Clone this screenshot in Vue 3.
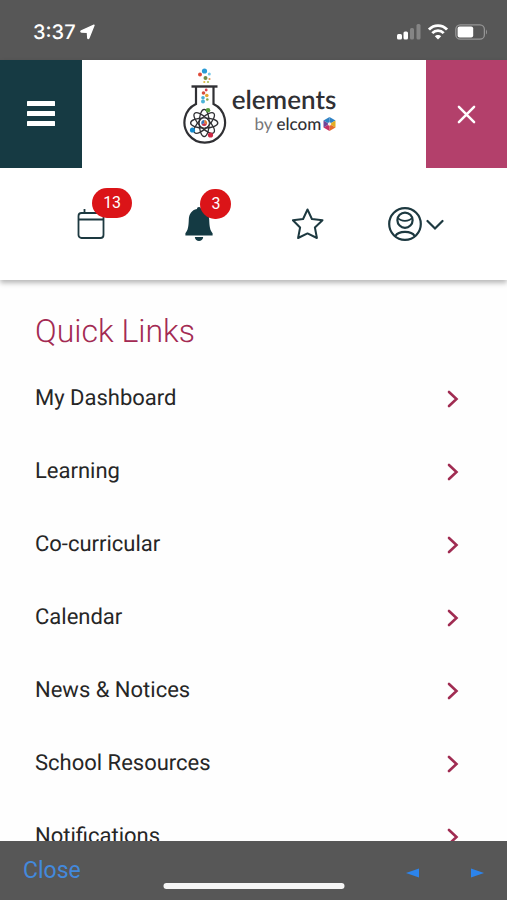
<script setup>
const links = [
  'My Dashboard',
  'Learning',
  'Co-curricular',
  'Calendar',
  'News & Notices',
  'School Resources',
  'Notifications',
]
</script>

<template>
  <div class="screen">
    <div class="status">
      <div class="status-time">
        <span>3:37</span>
        <svg width="15" height="16" viewBox="0 0 15 16" aria-hidden="true">
          <path d="M14 1.2 L8.8 14.2 Q8.2 15 7.8 14 L7.4 8.4 L1.4 8 Q.4 7.4 1.4 6.8 Z" fill="#fff" stroke="#fff" stroke-width="1.4" stroke-linejoin="round" />
        </svg>
      </div>
      <div class="status-icons">
        <svg width="24" height="16" viewBox="0 0 24 16" aria-hidden="true">
          <rect x="0" y="10" width="5" height="5.5" rx="1.5" fill="#fff" />
          <rect x="6.5" y="7.5" width="4.5" height="8" rx="1.5" fill="#fff" />
          <rect x="13" y="4" width="4" height="11.5" rx="1.5" fill="#858585" />
          <rect x="19.5" y="0" width="4" height="15.5" rx="1.5" fill="#858585" />
        </svg>
        <svg width="20" height="16" viewBox="0 0 20 16" fill="none" stroke="#fff" stroke-width="2.8" aria-hidden="true">
          <path d="M1 5.6 C6 .4 14 .4 19 5.6" />
          <path d="M4.3 9.1 C7.5 5.8 12.5 5.8 15.7 9.1" />
          <path d="M10 15.4 L6.8 12.2 C8.5 10.5 11.5 10.5 13.2 12.2 Z" fill="#fff" stroke="none" />
        </svg>
        <svg width="33" height="16" viewBox="0 0 33 16" aria-hidden="true">
          <rect x=".8" y=".8" width="28.6" height="14.4" rx="4.5" fill="none" stroke="#969696" stroke-width="1.3" />
          <rect x="2.6" y="2.6" width="15.6" height="10.8" rx="2" fill="#fff" />
          <path d="M31 5.4 Q33 8 31 10.6 Z" fill="#969696" />
        </svg>
      </div>
    </div>

    <header class="header">
      <div class="topbar">
        <button class="menu" type="button" aria-label="Menu">
          <svg width="28" height="26" viewBox="0 0 28 26" fill="#fff" aria-hidden="true">
            <rect y="0" width="28" height="5" rx=".5" />
            <rect y="10" width="28" height="5" rx=".5" />
            <rect y="20" width="28" height="5" rx=".5" />
          </svg>
        </button>
        <a class="brand" href="#">
          <svg width="44" height="77" viewBox="0 0 44 77" aria-hidden="true">
            <g fill="none" stroke="#303034">
              <path d="M13 19 V36 A20.3 20.3 0 1 0 30.5 36 V19" stroke-width="2.2" />
              <path d="M8.5 18.5 H34.5" stroke-width="2.4" />
              <g stroke-width="1.3">
                <ellipse cx="21.2" cy="55" rx="13.6" ry="5" />
                <ellipse cx="21.2" cy="55" rx="13.6" ry="5" transform="rotate(45 21.2 55)" />
                <ellipse cx="21.2" cy="55" rx="13.6" ry="5" transform="rotate(90 21.2 55)" />
                <ellipse cx="21.2" cy="55" rx="13.6" ry="5" transform="rotate(135 21.2 55)" />
              </g>
            </g>
            <circle cx="21.2" cy="55" r="4.4" fill="#fff" />
            <path d="M21.2 55 V52 A3 3 0 0 1 23.8 56.5 Z" fill="#e47a2e" />
            <path d="M21.2 55 L23.8 56.5 A3 3 0 0 1 18.6 56.5 Z" fill="#c8324b" />
            <path d="M21.2 55 L18.6 56.5 A3 3 0 0 1 21.2 52 Z" fill="#3973bb" />
            <circle cx="25" cy="42.3" r="2.3" fill="#579b3c" />
            <circle cx="9.5" cy="62" r="2.6" fill="#168acb" />
            <circle cx="27.5" cy="67" r="2.6" fill="#cc2844" />
            <circle cx="21.5" cy="3" r="2.6" fill="#2a9bd5" />
            <circle cx="17" cy="6.6" r="2" fill="#df4a39" />
            <circle cx="26.3" cy="6" r="1.5" fill="#73c7e8" />
            <circle cx="22.5" cy="10" r="2" fill="#718a48" />
            <circle cx="26.5" cy="11" r="1.1" fill="#e49151" />
            <circle cx="21.3" cy="14" r="1.1" fill="#e2b83c" />
            <circle cx="25" cy="14" r="1.1" fill="#a7bd58" />
            <circle cx="23.2" cy="22" r="1.4" fill="#d5404d" />
            <circle cx="20.5" cy="25" r="1.8" fill="#d64d3c" />
            <circle cx="23.8" cy="27.5" r="1.8" fill="#e4a531" />
            <circle cx="20" cy="29.7" r="1.8" fill="#45acd8" />
            <circle cx="24.3" cy="31.5" r="1.3" fill="#83a74d" />
            <circle cx="20" cy="33.5" r="2" fill="#4bb4d8" />
          </svg>
          <span class="wordmark">
            <span class="name">elements</span>
            <span class="by">
              <span>by</span> <b>elcom</b>
              <svg width="13" height="14" viewBox="0 0 13 14" aria-hidden="true">
                <path d="M6.5 7 L6.5 0 L12.5 3.5 Z" fill="#2f82c4" />
                <path d="M6.5 7 L12.5 3.5 V10.5 Z" fill="#e3ad21" />
                <path d="M6.5 7 L12.5 10.5 L6.5 14 Z" fill="#e76c2c" />
                <path d="M6.5 7 L6.5 14 L.5 10.5 Z" fill="#c52f65" />
                <path d="M6.5 7 L.5 10.5 V3.5 Z" fill="#704598" />
                <path d="M6.5 7 L.5 3.5 L6.5 0 Z" fill="#2f82c4" />
                <circle cx="6.5" cy="7" r="1.8" fill="#f5ece8" />
              </svg>
            </span>
          </span>
        </a>
        <button class="dismiss" type="button" aria-label="Close menu">
          <svg width="19" height="19" viewBox="0 0 20 20" fill="none" stroke="#fff" stroke-width="2.6" stroke-linecap="round" aria-hidden="true">
            <path d="M2 2 L18 18 M18 2 L2 18" />
          </svg>
        </button>
      </div>

      <nav class="tools" aria-label="Account tools">
        <button class="tool" type="button" aria-label="Calendar, 13 new">
          <span class="icon">
            <svg width="28" height="32" viewBox="0 0 28 32" fill="none" stroke="#1d3940" stroke-width="1.8" aria-hidden="true">
              <rect x="1.5" y="5" width="25" height="25" rx="3" />
              <path d="M1.5 11.5 H26.5 M7.5 1 V5" />
            </svg>
            <span class="badge">13</span>
          </span>
        </button>
        <button class="tool" type="button" aria-label="Alerts, 3 new">
          <span class="icon">
            <svg width="28" height="34" viewBox="0 0 28 34" fill="#143a43" aria-hidden="true">
              <path d="M14 0 C12.6 0 12 .8 12 2 C6.5 3 4 7.4 3.8 12.5 C3.6 19 3 23.5 .4 26.2 V28.4 H27.6 V26.2 C25 23.5 24.4 19 24.2 12.5 C24 7.4 21.5 3 16 2 C16 .8 15.4 0 14 0 Z" />
              <path d="M9.8 30 H18.2 C17.8 35.2 10.2 35.2 9.8 30 Z" />
            </svg>
            <span class="badge">3</span>
          </span>
        </button>
        <button class="tool" type="button" aria-label="Favourites">
          <svg width="32" height="32" viewBox="0 0 32 32" fill="none" stroke="#1d3940" stroke-width="2" stroke-linejoin="round" aria-hidden="true">
            <path d="M15.5 1.5 L19.9 11 L30.5 12.2 L22.9 19.5 L24.9 30 L15.5 25.4 L6.1 30 L8.1 19.5 L.9 12.2 L11.1 11 Z" />
          </svg>
        </button>
        <button class="tool" type="button" aria-label="Profile">
          <svg width="56" height="34" viewBox="0 0 56 34" fill="none" stroke="#1d3940" stroke-width="2.2" aria-hidden="true">
            <circle cx="17" cy="17" r="15.8" />
            <circle cx="17" cy="13.2" r="7.6" />
            <path d="M9.8 10.8 C13 14.8 21 14.8 24.2 10.8" stroke-width="1.8" />
            <path d="M7.4 29 C10.5 23.6 23.5 23.6 26.6 29" />
            <path d="M39.5 14 L47 21.5 L54.5 14" stroke-linecap="round" />
          </svg>
        </button>
      </nav>
    </header>

    <main class="content">
      <h1>Quick Links</h1>
      <ul>
        <li v-for="link in links" :key="link">
          <a href="#">
            <span>{{ link }}</span>
            <svg width="12" height="18" viewBox="0 0 12 18" fill="none" stroke="#a02c52" stroke-width="2.6" stroke-linecap="round" aria-hidden="true">
              <path d="M2 2 L9.5 9 L2 16" />
            </svg>
          </a>
        </li>
      </ul>
    </main>

    <footer class="browser">
      <button class="close" type="button">Close</button>
      <div class="arrows">
        <button type="button" aria-label="Back">
          <svg width="13" height="10" viewBox="0 0 13 10" fill="#2c84ec" aria-hidden="true"><path d="M0 5 L13 .5 V9.5 Z" /></svg>
        </button>
        <button type="button" aria-label="Forward">
          <svg width="13" height="10" viewBox="0 0 13 10" fill="#2c84ec" aria-hidden="true"><path d="M13 5 L0 .5 V9.5 Z" /></svg>
        </button>
      </div>
      <div class="home"></div>
    </footer>
  </div>
</template>

<style>
body {
  margin: 0;
  background: #fff;
}
</style>

<style scoped>
.screen {
  display: flex;
  flex-direction: column;
  height: 100vh;
  overflow: hidden;
  background: #fefefe;
  color: #262626;
  font-family: Roboto, "Liberation Sans", sans-serif;
  text-rendering: geometricPrecision;
}
svg {
  display: block;
  flex: none;
}
button {
  display: flex;
  align-items: center;
  justify-content: center;
  margin: 0;
  padding: 0;
  border: 0;
  background: none;
  color: inherit;
  font: inherit;
}
a {
  color: inherit;
  text-decoration: none;
}
.status {
  display: flex;
  flex: none;
  align-items: center;
  justify-content: space-between;
  box-sizing: border-box;
  height: 60px;
  padding: 4px 19px 0 33px;
  background: #575757;
}
.status-time {
  display: flex;
  align-items: center;
  gap: 4px;
  color: #fff;
  font: 500 20px/24px Inter, "Liberation Sans", sans-serif;
}
.status-icons {
  display: flex;
  align-items: center;
  gap: 7px;
}
.header {
  flex: none;
  background: #fff;
  box-shadow: 0 3px 5px rgba(0, 0, 0, 0.28);
}
.topbar {
  display: flex;
  height: 108px;
}
.menu {
  width: 82px;
  background: #163a43;
}
.dismiss {
  width: 81px;
  background: #b3406b;
}
.brand {
  display: flex;
  flex: 1;
  justify-content: center;
  gap: 5px;
  padding: 8px 0 0 11px;
}
.wordmark {
  display: flex;
  flex-direction: column;
  align-items: flex-end;
  padding-top: 16px;
  color: #303034;
  font-family: Lato, sans-serif;
}
.name {
  font-size: 26px;
  font-weight: 600;
  line-height: 30px;
}
.by {
  display: flex;
  align-items: center;
  gap: 4px;
  font-size: 17px;
  line-height: 20px;
}
.by span {
  color: #77777a;
}
.by b {
  font-weight: 500;
}
.by svg {
  margin-left: -2px;
}
.tools {
  display: grid;
  grid-template-columns: repeat(4, 1fr);
  height: 112px;
  padding: 0 37px;
}
.icon {
  position: relative;
}
.badge {
  position: absolute;
  bottom: 22px;
  left: 15px;
  box-sizing: border-box;
  min-width: 30px;
  height: 30px;
  padding: 0 11px;
  border-radius: 15px;
  background: #db1418;
  color: #fff;
  font-size: 16px;
  line-height: 30px;
}
.content {
  flex: 1;
  min-height: 0;
  overflow: hidden;
  padding: 31px 48px 0 35px;
}
h1 {
  margin: 0 0 11px;
  color: #a32a53;
  font-size: 32px;
  font-weight: 300;
  line-height: 40px;
}
ul {
  margin: 0;
  padding: 0;
  list-style: none;
}
li a {
  display: flex;
  align-items: center;
  justify-content: space-between;
  height: 73px;
  font-size: 22px;
}
.browser {
  position: relative;
  display: flex;
  flex: none;
  align-items: center;
  justify-content: space-between;
  height: 59px;
  padding: 0 23px;
  background: #575757;
}
.close {
  color: #4389dc;
  font-size: 23px;
}
.arrows {
  display: flex;
  gap: 52px;
  padding-top: 4px;
}
.home {
  position: absolute;
  bottom: 11px;
  left: 50%;
  width: 181px;
  height: 6px;
  border-radius: 3px;
  background: #f5f5f5;
  transform: translateX(-50%);
}
</style>
